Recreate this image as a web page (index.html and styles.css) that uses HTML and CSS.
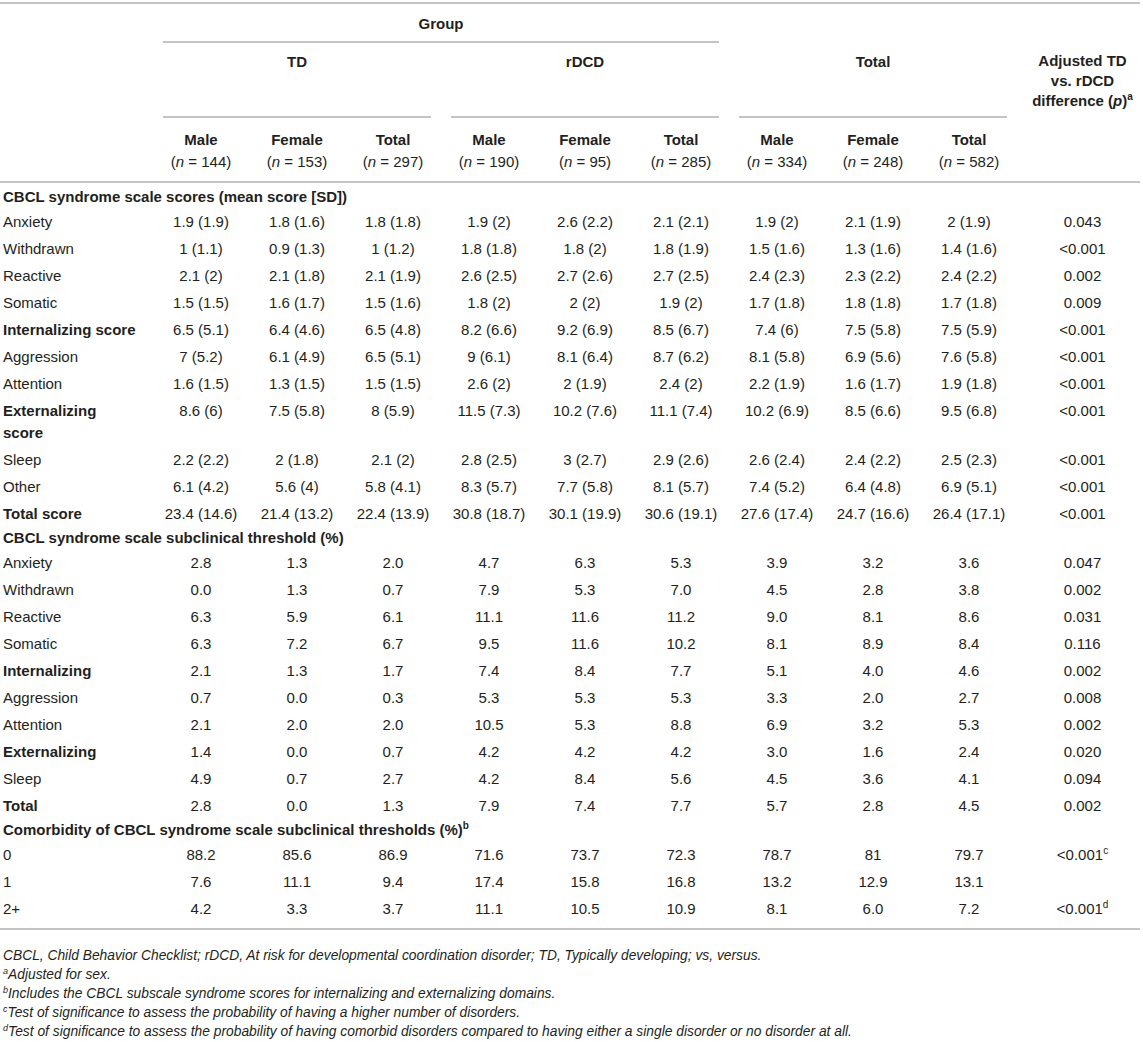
FILE: index.html
```html
<!DOCTYPE html>
<html lang="en">
<head>
<meta charset="utf-8">
<title>CBCL table</title>
<link rel="stylesheet" href="styles.css">
</head>
<body>
<table class="tbl">
  <colgroup>
    <col class="c-label">
    <col class="c-num"><col class="c-num"><col class="c-num">
    <col class="c-num"><col class="c-num"><col class="c-num">
    <col class="c-num"><col class="c-num"><col class="c-num">
    <col class="c-p">
  </colgroup>
  <thead>
    <tr class="h-a">
      <th class="blank"></th>
      <th colspan="6" class="grp-line">Group</th>
      <th colspan="4" class="blank"></th>
    </tr>
    <tr class="h-b">
      <th class="blank"></th>
      <th colspan="3" class="grp-line">TD</th>
      <th colspan="3" class="grp-line">rDCD</th>
      <th colspan="3" class="grp-line">Total</th>
      <th class="adj" rowspan="2">Adjusted TD<br>vs. rDCD<br>difference (<i>p</i>)<sup>a</sup></th>
    </tr>
    <tr class="h-c">
      <th class="blank"></th>
      <th>Male<br><span class="n">(<i>n</i> = 144)</span></th>
      <th>Female<br><span class="n">(<i>n</i> = 153)</span></th>
      <th>Total<br><span class="n">(<i>n</i> = 297)</span></th>
      <th>Male<br><span class="n">(<i>n</i> = 190)</span></th>
      <th>Female<br><span class="n">(<i>n</i> = 95)</span></th>
      <th>Total<br><span class="n">(<i>n</i> = 285)</span></th>
      <th>Male<br><span class="n">(<i>n</i> = 334)</span></th>
      <th>Female<br><span class="n">(<i>n</i> = 248)</span></th>
      <th>Total<br><span class="n">(<i>n</i> = 582)</span></th>
    </tr>
  </thead>
  <tbody>
    <tr class="sec first"><td colspan="11">CBCL syndrome scale scores (mean score [SD])</td></tr>
    <tr><td>Anxiety</td><td>1.9 (1.9)</td><td>1.8 (1.6)</td><td>1.8 (1.8)</td><td>1.9 (2)</td><td>2.6 (2.2)</td><td>2.1 (2.1)</td><td>1.9 (2)</td><td>2.1 (1.9)</td><td>2 (1.9)</td><td class="p">0.043</td></tr>
    <tr><td>Withdrawn</td><td>1 (1.1)</td><td>0.9 (1.3)</td><td>1 (1.2)</td><td>1.8 (1.8)</td><td>1.8 (2)</td><td>1.8 (1.9)</td><td>1.5 (1.6)</td><td>1.3 (1.6)</td><td>1.4 (1.6)</td><td class="p">&lt;0.001</td></tr>
    <tr><td>Reactive</td><td>2.1 (2)</td><td>2.1 (1.8)</td><td>2.1 (1.9)</td><td>2.6 (2.5)</td><td>2.7 (2.6)</td><td>2.7 (2.5)</td><td>2.4 (2.3)</td><td>2.3 (2.2)</td><td>2.4 (2.2)</td><td class="p">0.002</td></tr>
    <tr><td>Somatic</td><td>1.5 (1.5)</td><td>1.6 (1.7)</td><td>1.5 (1.6)</td><td>1.8 (2)</td><td>2 (2)</td><td>1.9 (2)</td><td>1.7 (1.8)</td><td>1.8 (1.8)</td><td>1.7 (1.8)</td><td class="p">0.009</td></tr>
    <tr><td class="b">Internalizing score</td><td>6.5 (5.1)</td><td>6.4 (4.6)</td><td>6.5 (4.8)</td><td>8.2 (6.6)</td><td>9.2 (6.9)</td><td>8.5 (6.7)</td><td>7.4 (6)</td><td>7.5 (5.8)</td><td>7.5 (5.9)</td><td class="p">&lt;0.001</td></tr>
    <tr><td>Aggression</td><td>7 (5.2)</td><td>6.1 (4.9)</td><td>6.5 (5.1)</td><td>9 (6.1)</td><td>8.1 (6.4)</td><td>8.7 (6.2)</td><td>8.1 (5.8)</td><td>6.9 (5.6)</td><td>7.6 (5.8)</td><td class="p">&lt;0.001</td></tr>
    <tr><td>Attention</td><td>1.6 (1.5)</td><td>1.3 (1.5)</td><td>1.5 (1.5)</td><td>2.6 (2)</td><td>2 (1.9)</td><td>2.4 (2)</td><td>2.2 (1.9)</td><td>1.6 (1.7)</td><td>1.9 (1.8)</td><td class="p">&lt;0.001</td></tr>
    <tr><td class="b">Externalizing<br>score</td><td>8.6 (6)</td><td>7.5 (5.8)</td><td>8 (5.9)</td><td>11.5 (7.3)</td><td>10.2 (7.6)</td><td>11.1 (7.4)</td><td>10.2 (6.9)</td><td>8.5 (6.6)</td><td>9.5 (6.8)</td><td class="p">&lt;0.001</td></tr>
    <tr><td>Sleep</td><td>2.2 (2.2)</td><td>2 (1.8)</td><td>2.1 (2)</td><td>2.8 (2.5)</td><td>3 (2.7)</td><td>2.9 (2.6)</td><td>2.6 (2.4)</td><td>2.4 (2.2)</td><td>2.5 (2.3)</td><td class="p">&lt;0.001</td></tr>
    <tr><td>Other</td><td>6.1 (4.2)</td><td>5.6 (4)</td><td>5.8 (4.1)</td><td>8.3 (5.7)</td><td>7.7 (5.8)</td><td>8.1 (5.7)</td><td>7.4 (5.2)</td><td>6.4 (4.8)</td><td>6.9 (5.1)</td><td class="p">&lt;0.001</td></tr>
    <tr><td class="b">Total score</td><td>23.4 (14.6)</td><td>21.4 (13.2)</td><td>22.4 (13.9)</td><td>30.8 (18.7)</td><td>30.1 (19.9)</td><td>30.6 (19.1)</td><td>27.6 (17.4)</td><td>24.7 (16.6)</td><td>26.4 (17.1)</td><td class="p">&lt;0.001</td></tr>

    <tr class="sec"><td colspan="11">CBCL syndrome scale subclinical threshold (%)</td></tr>
    <tr><td>Anxiety</td><td>2.8</td><td>1.3</td><td>2.0</td><td>4.7</td><td>6.3</td><td>5.3</td><td>3.9</td><td>3.2</td><td>3.6</td><td class="p">0.047</td></tr>
    <tr><td>Withdrawn</td><td>0.0</td><td>1.3</td><td>0.7</td><td>7.9</td><td>5.3</td><td>7.0</td><td>4.5</td><td>2.8</td><td>3.8</td><td class="p">0.002</td></tr>
    <tr><td>Reactive</td><td>6.3</td><td>5.9</td><td>6.1</td><td>11.1</td><td>11.6</td><td>11.2</td><td>9.0</td><td>8.1</td><td>8.6</td><td class="p">0.031</td></tr>
    <tr><td>Somatic</td><td>6.3</td><td>7.2</td><td>6.7</td><td>9.5</td><td>11.6</td><td>10.2</td><td>8.1</td><td>8.9</td><td>8.4</td><td class="p">0.116</td></tr>
    <tr><td class="b">Internalizing</td><td>2.1</td><td>1.3</td><td>1.7</td><td>7.4</td><td>8.4</td><td>7.7</td><td>5.1</td><td>4.0</td><td>4.6</td><td class="p">0.002</td></tr>
    <tr><td>Aggression</td><td>0.7</td><td>0.0</td><td>0.3</td><td>5.3</td><td>5.3</td><td>5.3</td><td>3.3</td><td>2.0</td><td>2.7</td><td class="p">0.008</td></tr>
    <tr><td>Attention</td><td>2.1</td><td>2.0</td><td>2.0</td><td>10.5</td><td>5.3</td><td>8.8</td><td>6.9</td><td>3.2</td><td>5.3</td><td class="p">0.002</td></tr>
    <tr><td class="b">Externalizing</td><td>1.4</td><td>0.0</td><td>0.7</td><td>4.2</td><td>4.2</td><td>4.2</td><td>3.0</td><td>1.6</td><td>2.4</td><td class="p">0.020</td></tr>
    <tr><td>Sleep</td><td>4.9</td><td>0.7</td><td>2.7</td><td>4.2</td><td>8.4</td><td>5.6</td><td>4.5</td><td>3.6</td><td>4.1</td><td class="p">0.094</td></tr>
    <tr><td class="b">Total</td><td>2.8</td><td>0.0</td><td>1.3</td><td>7.9</td><td>7.4</td><td>7.7</td><td>5.7</td><td>2.8</td><td>4.5</td><td class="p">0.002</td></tr>

    <tr class="sec"><td colspan="11">Comorbidity of CBCL syndrome scale subclinical thresholds (%)<sup>b</sup></td></tr>
    <tr><td>0</td><td>88.2</td><td>85.6</td><td>86.9</td><td>71.6</td><td>73.7</td><td>72.3</td><td>78.7</td><td>81</td><td>79.7</td><td class="p">&lt;0.001<sup>c</sup></td></tr>
    <tr><td>1</td><td>7.6</td><td>11.1</td><td>9.4</td><td>17.4</td><td>15.8</td><td>16.8</td><td>13.2</td><td>12.9</td><td>13.1</td><td class="p"></td></tr>
    <tr class="last"><td>2+</td><td>4.2</td><td>3.3</td><td>3.7</td><td>11.1</td><td>10.5</td><td>10.9</td><td>8.1</td><td>6.0</td><td>7.2</td><td class="p">&lt;0.001<sup>d</sup></td></tr>
  </tbody>
</table>
<div class="notes">
  <p>CBCL, Child Behavior Checklist; rDCD, At risk for developmental coordination disorder; TD, Typically developing; vs, versus.</p>
  <p><sup>a</sup>Adjusted for sex.</p>
  <p><sup>b</sup>Includes the CBCL subscale syndrome scores for internalizing and externalizing domains.</p>
  <p><sup>c</sup>Test of significance to assess the probability of having a higher number of disorders.</p>
  <p><sup>d</sup>Test of significance to assess the probability of having comorbid disorders compared to having either a single disorder or no disorder at all.</p>
</div>
</body>
</html>
```
FILE: styles.css
```css
body {
  margin: 0;
  background: #ffffff;
  color: #231f20;
  font-family: "Liberation Sans", Arial, Helvetica, sans-serif;
}

.tbl {
  width: 1140px;
  margin-top: 2px;
  border-collapse: collapse;
  table-layout: fixed;
  font-size: 15px;
  border-top: 2px solid #c4c4c4;
  border-bottom: 2px solid #c4c4c4;
}

.c-label { width: 153px; }
.c-num { width: 96px; }
.c-p { width: 123px; }

.tbl th {
  font-weight: bold;
  text-align: center;
  line-height: 21px;
  padding: 0;
  vertical-align: top;
}

.tbl thead { border-bottom: 2px solid #c4c4c4; }

.h-a th { padding: 9px 0 9px; }
.h-b th { padding: 8px 0 46px; }
.h-b th.adj { padding: 8px 0 0 8px; line-height: 20px; }
.h-c th { padding: 11px 0 8px; line-height: 22px; }

.n { font-weight: normal; }

.grp-line {
  background: linear-gradient(#c4c4c4, #c4c4c4) no-repeat center bottom / calc(100% - 20px) 2px;
}

.tbl sup {
  font-size: 10px;
  line-height: 0;
  vertical-align: 6px;
}

.tbl td {
  padding: 3px 0 2px;
  line-height: 22px;
  text-align: center;
  vertical-align: top;
  white-space: nowrap;
}

.tbl td:first-child {
  text-align: left;
  padding-left: 3px;
}

.tbl td.p { padding-left: 8px; }

.tbl td.b { font-weight: bold; }

.tbl tr.sec td {
  font-weight: bold;
  padding: 0 0 0 3px;
  text-align: left;
}

.tbl tr.sec.first td { padding-top: 3px; }

.tbl tr.last td { padding-bottom: 8px; }

.notes {
  padding: 16px 0 0 3px;
  font-size: 13.8px;
  font-style: italic;
  line-height: 19px;
}

.notes p { margin: 0; }

.notes sup {
  font-size: 9px;
  line-height: 0;
  vertical-align: 5px;
}
```
